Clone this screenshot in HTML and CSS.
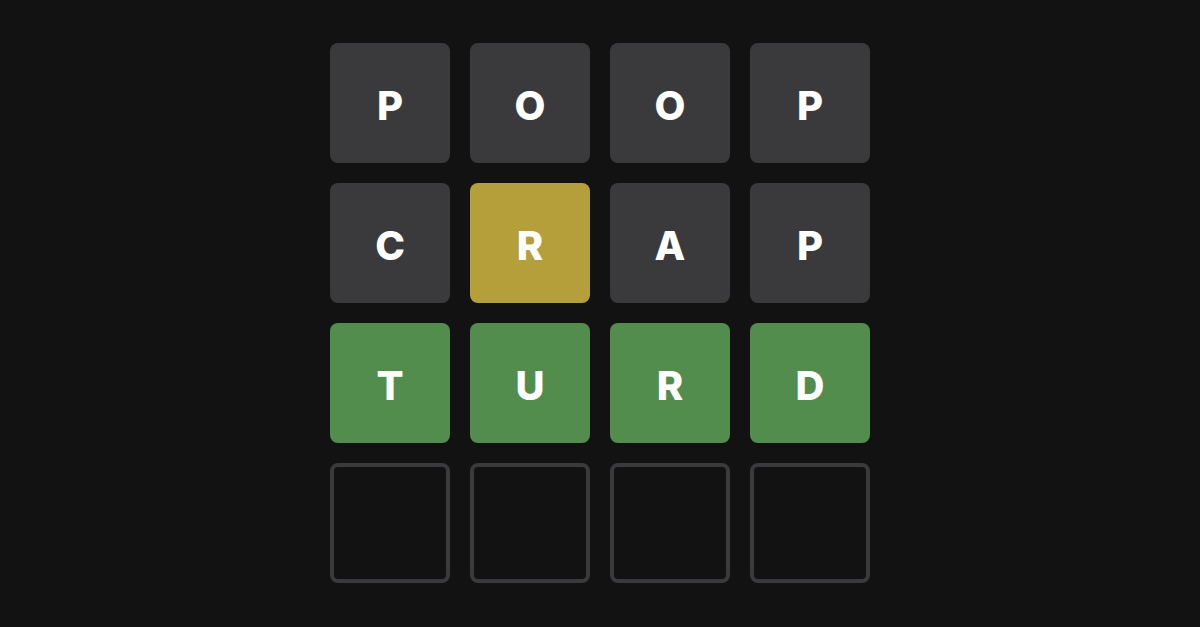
FILE: index.html
```html
<!DOCTYPE html>
<html lang="en">
<head>
<meta charset="utf-8">
<title>Wordle</title>
<link rel="stylesheet" href="styles.css">
</head>
<body>
<main class="board">
  <div class="tile absent">P</div>
  <div class="tile absent">O</div>
  <div class="tile absent">O</div>
  <div class="tile absent">P</div>
  <div class="tile absent">C</div>
  <div class="tile present">R</div>
  <div class="tile absent">A</div>
  <div class="tile absent">P</div>
  <div class="tile correct">T</div>
  <div class="tile correct">U</div>
  <div class="tile correct">R</div>
  <div class="tile correct">D</div>
  <div class="tile empty"></div>
  <div class="tile empty"></div>
  <div class="tile empty"></div>
  <div class="tile empty"></div>
</main>
</body>
</html>
```
FILE: styles.css
```css
html, body {
  margin: 0;
  padding: 0;
  background: #121212;
  width: 1200px;
  height: 627px;
  overflow: hidden;
}
body {
  font-family: Inter, "Liberation Sans", sans-serif;
}
.board {
  display: grid;
  grid-template-columns: repeat(4, 120px);
  grid-auto-rows: 120px;
  gap: 20px;
  width: 540px;
  margin: 43px auto 0;
}
.tile {
  box-sizing: border-box;
  border-radius: 8px;
  display: flex;
  align-items: center;
  justify-content: center;
  color: #ffffff;
  font-size: 40px;
  font-weight: 800;
  line-height: 1;
  padding-top: 5px;
}
.absent { background: #3a3a3c; }
.present { background: #b59f3b; }
.correct { background: #538d4e; }
.empty {
  background: transparent;
  border: 4px solid #3a3a3c;
}
```
